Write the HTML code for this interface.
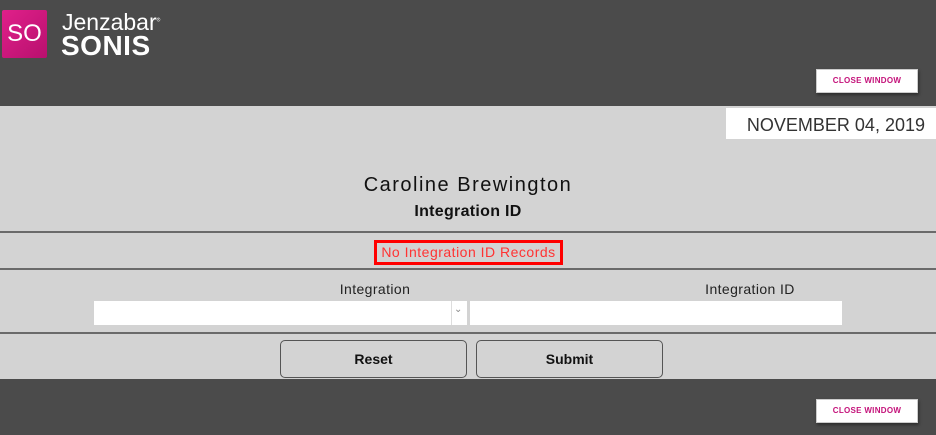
<!DOCTYPE html>
<html><head><style>
body{margin:0;width:936px;height:435px;position:relative;background:#d3d3d3;font-family:"Liberation Sans",sans-serif;overflow:hidden}
.dark{position:absolute;left:0;width:936px;background:#4b4b4b}
.abs{position:absolute}
.cw{position:absolute;left:816px;width:102px;height:24px;background:#fff;border:1px solid #ccc;box-sizing:border-box;box-shadow:1px 2px 3px rgba(0,0,0,.4);color:#c4127a;font-size:8px;font-weight:bold;text-align:center;line-height:22px;letter-spacing:0.3px}
.line{position:absolute;left:0;width:936px;height:2px;background:#6a6a6a}
.btn{position:absolute;top:340px;width:187px;height:38px;border:1px solid #555;border-radius:5px;box-sizing:border-box;text-align:center;line-height:36px;font-weight:bold;font-size:14px;color:#111}
</style></head><body>
<div class="dark" style="top:0;height:106px"></div>
<div class="dark" style="top:379px;height:56px"></div>
<div class="abs" style="left:2px;top:10px;width:45px;height:48px;background:linear-gradient(135deg,#e0208a,#b8106e);border-radius:2px;color:#fff;font-size:24px;line-height:48px;text-align:center">SO</div>
<div class="abs" style="left:62px;top:9px;color:#fff;font-size:23px">Jenzabar<sup style="font-size:5px">®</sup></div>
<div class="abs" style="left:61px;top:30px;color:#fff;font-size:28px;font-weight:bold;letter-spacing:0.5px">SONIS</div>
<div class="cw" style="top:69px">CLOSE WINDOW</div>
<div class="cw" style="top:399px">CLOSE WINDOW</div>
<div class="abs" style="left:726px;top:108px;width:210px;height:31px;background:#fff;color:#333;font-size:18px;line-height:34px;text-align:right;box-sizing:border-box;padding-right:11px">NOVEMBER 04, 2019</div>
<div class="abs" style="left:0;width:936px;top:174px;text-align:center;font-size:20px;color:#111;letter-spacing:1.5px">Caroline Brewington</div>
<div class="abs" style="left:0;width:936px;top:203px;text-align:center;font-size:16px;font-weight:bold;color:#111;letter-spacing:0.3px">Integration ID</div>
<div class="line" style="top:231px"></div>
<div class="abs" style="left:374px;top:240px;width:189px;height:25px;border:3px solid #f00;box-sizing:border-box;color:#f33;font-size:14px;line-height:19px;text-align:center;letter-spacing:0.5px">No Integration ID Records</div>
<div class="line" style="top:268px"></div>
<div class="abs" style="left:94px;width:562px;top:281px;text-align:center;font-size:14px;color:#222;letter-spacing:0.4px">Integration</div>
<div class="abs" style="left:660px;width:180px;top:281px;text-align:center;font-size:14px;color:#222;letter-spacing:0.4px">Integration ID</div>
<div class="abs" style="left:94px;top:301px;width:373px;height:24px;background:#fff"></div>
<div class="abs" style="left:451px;top:301px;width:1px;height:24px;background:#ddd"></div>
<div class="abs" style="left:454px;top:304px;font-size:10px;color:#888">⌄</div>
<div class="abs" style="left:470px;top:301px;width:372px;height:24px;background:#fff"></div>
<div class="line" style="top:332px"></div>
<div class="btn" style="left:280px">Reset</div>
<div class="btn" style="left:476px">Submit</div>
</body></html>
